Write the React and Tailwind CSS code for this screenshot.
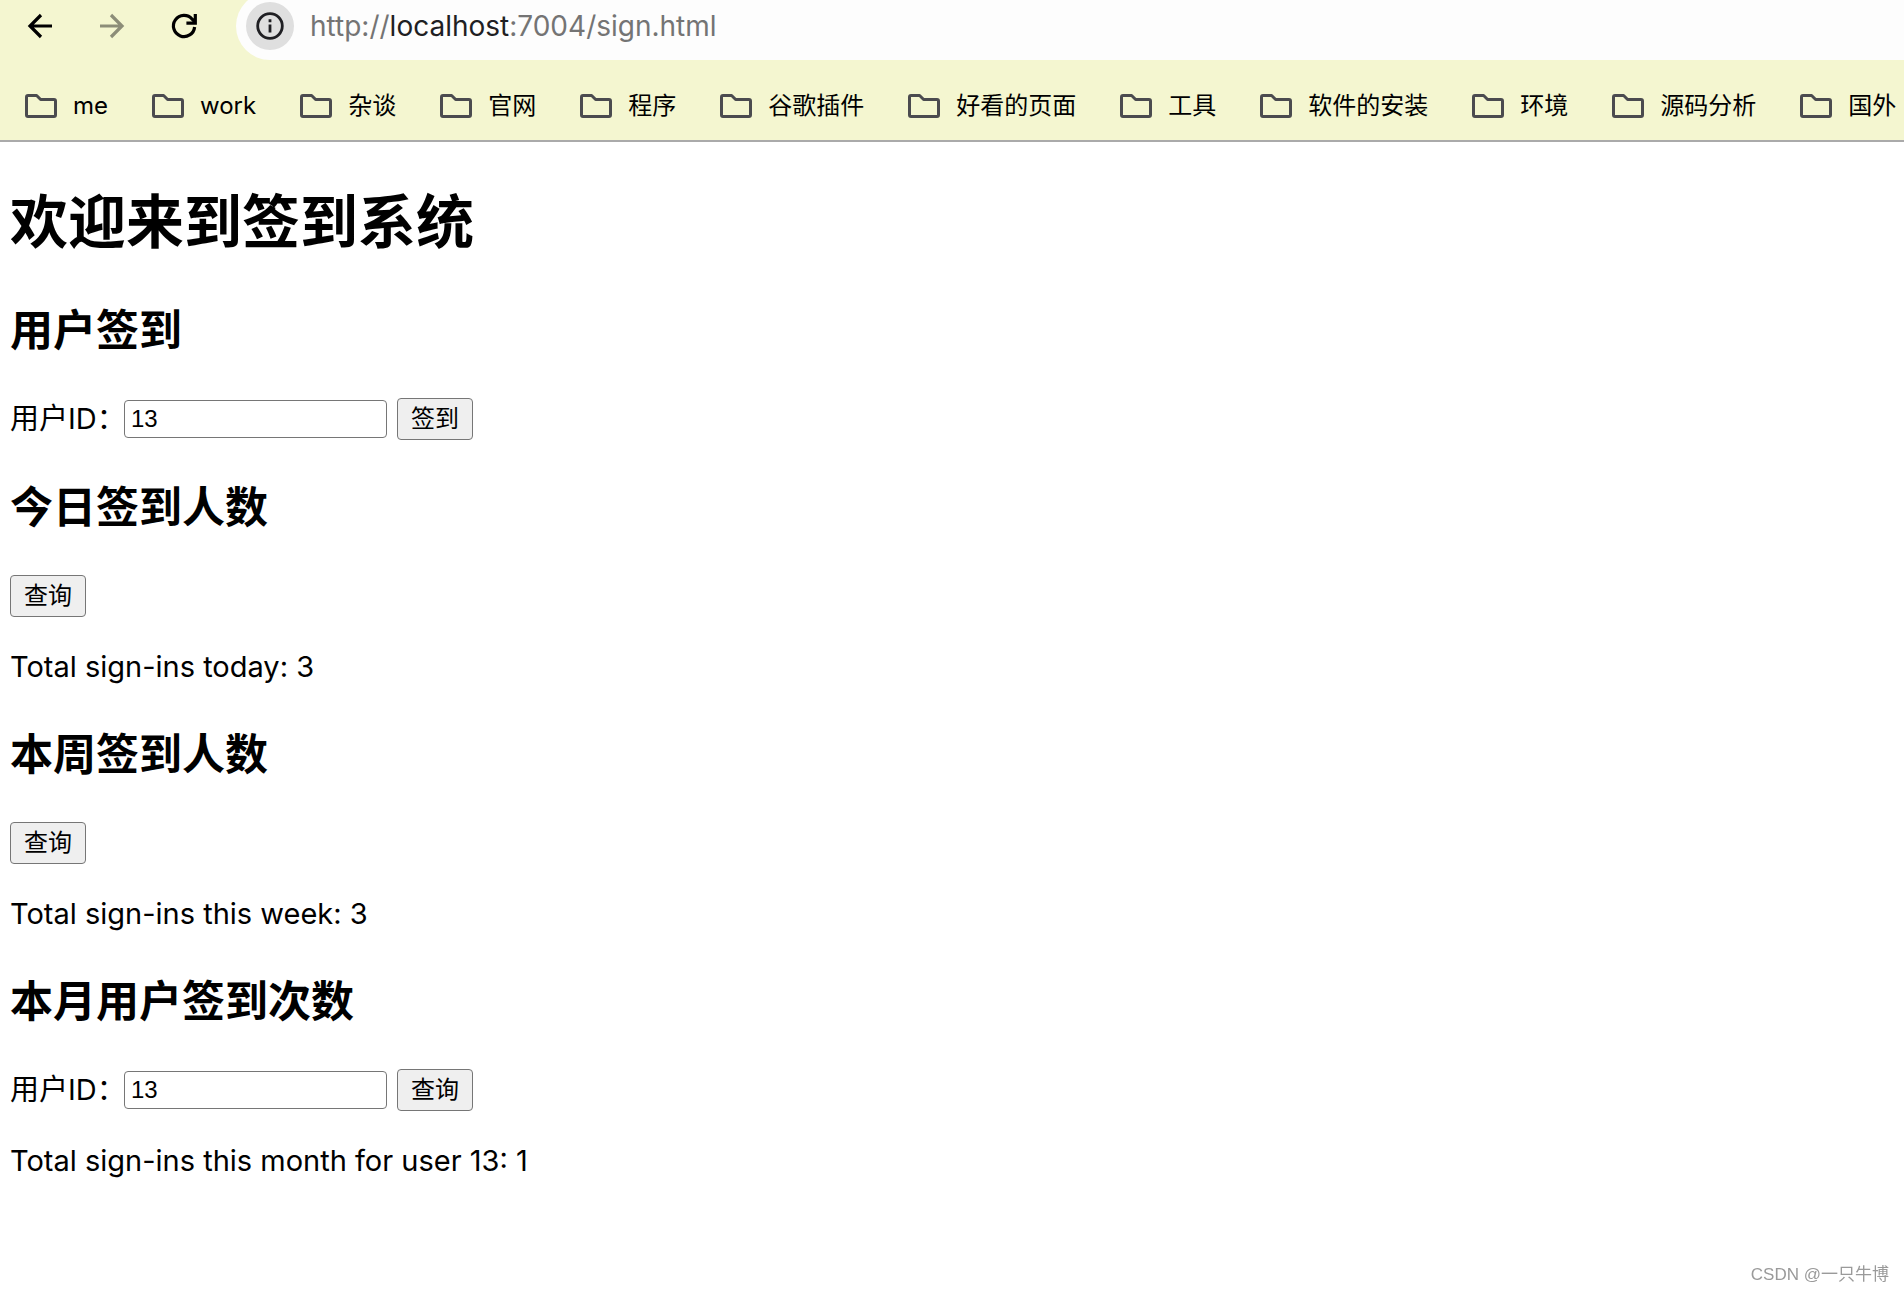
import { useState } from 'react';

const BOOKMARKS = [
  'me',
  'work',
  '杂谈',
  '官网',
  '程序',
  '谷歌插件',
  '好看的页面',
  '工具',
  '软件的安装',
  '环境',
  '源码分析',
  '国外',
];

function BackIcon() {
  return (
    <svg viewBox="0 0 36 36" className="w-9 h-9" fill="none" stroke="currentColor" strokeWidth="3.2">
      <path d="M30 18H8M19 7L8 18l11 11" />
    </svg>
  );
}

function ForwardIcon() {
  return (
    <svg viewBox="0 0 36 36" className="w-9 h-9" fill="none" stroke="currentColor" strokeWidth="3.2">
      <path d="M6 18h22M17 7l11 11-11 11" />
    </svg>
  );
}

function ReloadIcon() {
  return (
    <svg viewBox="0 0 36 36" className="w-9 h-9" fill="none" stroke="currentColor" strokeWidth="3.2">
      <path d="M28.6 19a10.6 10.6 0 1 1-2.4-7.8L29 14" />
      <path d="M29.3 6v9.2H20.4" />
    </svg>
  );
}

function InfoIcon() {
  return (
    <svg viewBox="0 0 28 28" className="w-7 h-7" fill="none" stroke="currentColor" strokeWidth="2.8">
      <circle cx="14" cy="14" r="12.3" />
      <path d="M14 12.6v8M14 7.2v3" />
    </svg>
  );
}

function FolderIcon() {
  return (
    <svg viewBox="0 0 34 26" className="w-[34px] h-[26px] shrink-0" fill="none" stroke="#4b4b4f" strokeWidth="3" strokeLinejoin="round">
      <path d="M4 2.5h8.6l4 4H30a1.5 1.5 0 0 1 1.5 1.5v14a1.5 1.5 0 0 1-1.5 1.5H4A1.5 1.5 0 0 1 2.5 22V4A1.5 1.5 0 0 1 4 2.5z" />
    </svg>
  );
}

function Browser() {
  return (
    <header className="bg-[#f4f6d0] border-b-2 border-[#aaaaaa] overflow-hidden font-['Inter','Noto_Sans_CJK_SC',sans-serif]">
      {/* Toolbar */}
      <div className="flex items-center -mt-2 h-[68px] pl-[22px]">
        <div className="flex items-center gap-9">
          <button type="button" aria-label="Back" className="text-black"><BackIcon /></button>
          <button type="button" aria-label="Forward" className="text-[#8c8d78]"><ForwardIcon /></button>
          <button type="button" aria-label="Reload" className="text-black"><ReloadIcon /></button>
        </div>
        <div className="flex flex-1 items-center gap-4 ml-[34px] h-full pl-[10px] rounded-l-full bg-[#fdfdfd]">
          <button type="button" aria-label="Site information" className="flex items-center justify-center w-12 h-12 rounded-full bg-[#dfdfdf] text-[#1f1f23]">
            <InfoIcon />
          </button>
          <a href="#" className="text-[28px] leading-9 text-[#747474] whitespace-nowrap">
            http://<span className="text-[#1f1f23]">localhost</span>:7004/sign.html
          </a>
        </div>
      </div>

      {/* Bookmarks */}
      <nav className="flex items-center gap-[43px] h-20 pl-6 pt-3 overflow-hidden">
        {BOOKMARKS.map((name) => (
          <a key={name} href="#" className="flex items-center gap-[15px] shrink-0 text-2xl text-black whitespace-nowrap">
            <FolderIcon />
            {name}
          </a>
        ))}
      </nav>
    </header>
  );
}

function Button({ children }) {
  return (
    <button type="button" className="h-[42px] px-[13px] border border-[#767676] rounded-[4px] bg-[#efefef] text-2xl text-black">
      {children}
    </button>
  );
}

function Section({ title, children }) {
  return (
    <section className="mt-[37px]">
      <h2 className="mb-[38px] text-[43px] leading-[60px] font-bold">{title}</h2>
      {children}
    </section>
  );
}

function UserForm({ id, action }) {
  const [userId, setUserId] = useState('13');

  return (
    <form className="flex items-center" onSubmit={(e) => e.preventDefault()}>
      <label htmlFor={id} className="w-[114px] text-[29px] leading-10 whitespace-nowrap">用户ID：</label>
      <input
        id={id}
        type="text"
        value={userId}
        onChange={(e) => setUserId(e.target.value)}
        className="w-[263px] h-[38px] mr-[10px] px-[6px] border border-[#767676] rounded-[4px] bg-white text-2xl font-['Liberation_Sans',sans-serif]"
      />
      <Button>{action}</Button>
    </form>
  );
}

function Result({ children }) {
  return <p className="mt-[30px] text-[29px] leading-10">{children}</p>;
}

export default function App() {
  return (
    <div className="min-h-screen bg-white text-black">
      <Browser />

      <main className="px-[10px] pt-[39px] font-['Inter','Noto_Sans_CJK_SC',sans-serif]">
        <h1 className="text-[58px] leading-[82px] font-bold">欢迎来到签到系统</h1>

        <Section title="用户签到">
          <UserForm id="sign-user" action="签到" />
        </Section>

        <Section title="今日签到人数">
          <Button>查询</Button>
          <Result>Total sign-ins today: 3</Result>
        </Section>

        <Section title="本周签到人数">
          <Button>查询</Button>
          <Result>Total sign-ins this week: 3</Result>
        </Section>

        <Section title="本月用户签到次数">
          <UserForm id="month-user" action="查询" />
          <Result>Total sign-ins this month for user 13: 1</Result>
        </Section>
      </main>

      <p className="fixed bottom-[3px] right-[15px] text-[17px] leading-7 text-[#9a9a9a] font-['Liberation_Sans','Noto_Sans_CJK_SC',sans-serif]">
        CSDN @一只牛博
      </p>
    </div>
  );
}
